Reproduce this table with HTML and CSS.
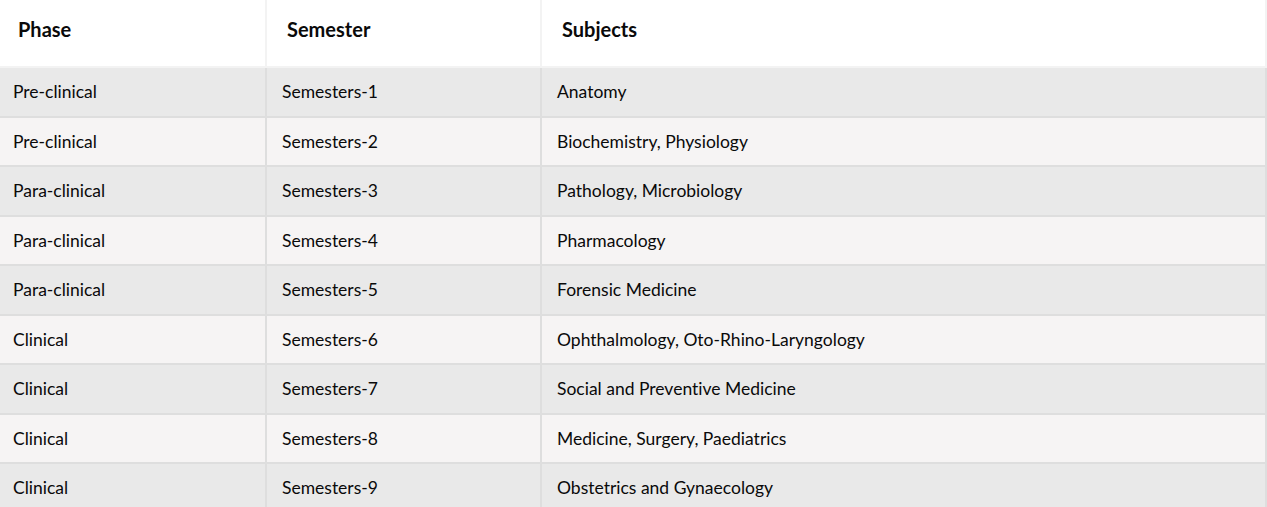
FILE: index.html
```html
<!DOCTYPE html>
<html>
<head>
<meta charset="utf-8">
<link rel="stylesheet" href="styles.css">
</head>
<body>
<table class="course-table">
  <thead>
    <tr>
      <th class="col-phase">Phase</th>
      <th class="col-sem">Semester</th>
      <th class="col-subj">Subjects</th>
    </tr>
  </thead>
  <tbody>
    <tr><td>Pre-clinical</td><td>Semesters-1</td><td>Anatomy</td></tr>
    <tr><td>Pre-clinical</td><td>Semesters-2</td><td>Biochemistry, Physiology</td></tr>
    <tr><td>Para-clinical</td><td>Semesters-3</td><td>Pathology, Microbiology</td></tr>
    <tr><td>Para-clinical</td><td>Semesters-4</td><td>Pharmacology</td></tr>
    <tr><td>Para-clinical</td><td>Semesters-5</td><td>Forensic Medicine</td></tr>
    <tr><td>Clinical</td><td>Semesters-6</td><td>Ophthalmology, Oto-Rhino-Laryngology</td></tr>
    <tr><td>Clinical</td><td>Semesters-7</td><td>Social and Preventive Medicine</td></tr>
    <tr><td>Clinical</td><td>Semesters-8</td><td>Medicine, Surgery, Paediatrics</td></tr>
    <tr><td>Clinical</td><td>Semesters-9</td><td>Obstetrics and Gynaecology</td></tr>
  </tbody>
</table>
</body>
</html>
```
FILE: styles.css
```css
html, body {
  margin: 0;
  padding: 0;
  background: #ffffff;
}
body {
  font-family: Lato, "Liberation Sans", sans-serif;
  font-variant-ligatures: none;
  color: #0a0a0a;
  overflow: hidden;
}
.course-table {
  width: 1267px;
  border-collapse: collapse;
  table-layout: fixed;
}
.col-phase { width: 266px; }
.col-sem { width: 275px; }
.col-subj { width: auto; }
.course-table th {
  background: #ffffff;
  font-size: 20px;
  font-weight: 700;
  text-align: left;
  height: 67px;
  padding: 0 0 9px 18px;
  border: 2px solid #f3f3f3;
  border-top: none;
  box-sizing: border-box;
}
.course-table th:first-child { border-left: none; }
.course-table th + th { padding-left: 20px; }
.course-table td {
  font-size: 17.5px;
  height: 47.5px;
  padding: 0 0 0 13px;
  border: 2px solid #dedede;
  border-top: none;
}
.course-table td:first-child { border-left: none; }
.course-table td + td { padding-left: 15px; }
.course-table tbody tr:nth-child(odd) td { background: #e9e9e9; }
.course-table tbody tr:nth-child(even) td { background: #f6f4f4; }
```
